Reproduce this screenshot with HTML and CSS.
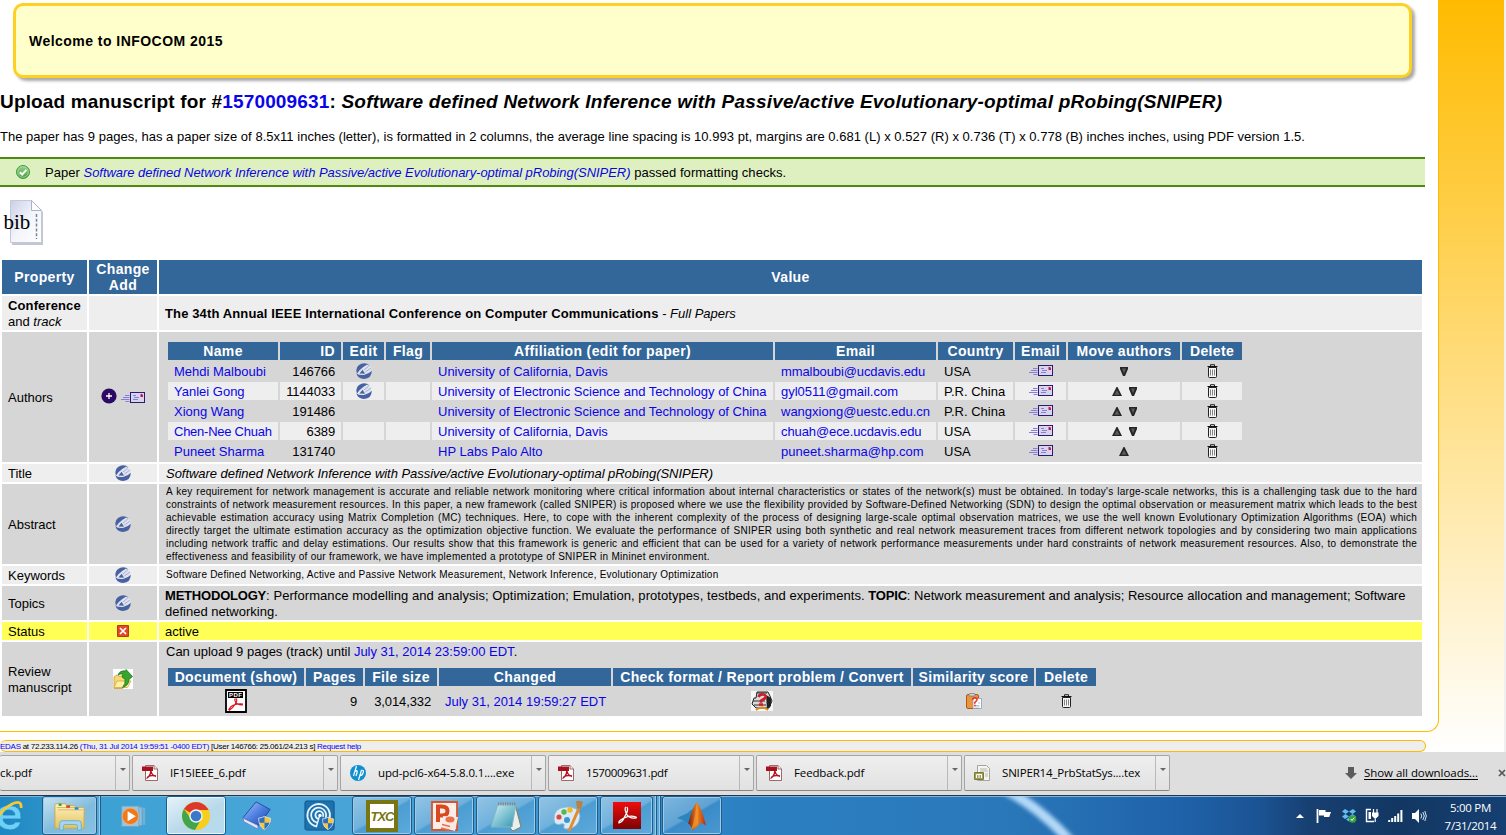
FILE: index.html
```html
<!DOCTYPE html>
<html lang="en">
<head>
<meta charset="utf-8">
<title>Upload manuscript</title>
<link rel="stylesheet" href="styles.css">
</head>
<body>
<svg class="defs" aria-hidden="true">
  <defs>
    <linearGradient id="gPage" x1="0" y1="0" x2="1" y2="1"><stop offset="0" stop-color="#c9cfe6"/><stop offset=".5" stop-color="#f3f5fc"/><stop offset="1" stop-color="#fff"/></linearGradient>
    <linearGradient id="gGreen" x1="0" y1="0" x2="0" y2="1"><stop offset="0" stop-color="#9ad48b"/><stop offset="1" stop-color="#3f9c3a"/></linearGradient>
    <linearGradient id="gRed" x1="0" y1="0" x2="0" y2="1"><stop offset="0" stop-color="#ef0d0d"/><stop offset="1" stop-color="#7c0303"/></linearGradient>
    <linearGradient id="gFlame" x1="0" y1="0" x2="1" y2="0"><stop offset="0" stop-color="#7b1d10"/><stop offset=".5" stop-color="#f08322"/><stop offset="1" stop-color="#b12a10"/></linearGradient>
    <linearGradient id="gFolder" x1="0" y1="0" x2="0" y2="1"><stop offset="0" stop-color="#fdf3c0"/><stop offset="1" stop-color="#e3c25e"/></linearGradient>
    <linearGradient id="gBook" x1="0" y1="0" x2="1" y2="1"><stop offset="0" stop-color="#a9c8ff"/><stop offset=".5" stop-color="#4e7fe0"/><stop offset="1" stop-color="#1c3fa6"/></linearGradient>
    <linearGradient id="gNote" x1="0" y1="0" x2="1" y2="1"><stop offset="0" stop-color="#d6f3f8"/><stop offset="1" stop-color="#2f96b0"/></linearGradient>
    <symbol id="pencil" viewBox="0 0 16 16">
      <path d="M8 .2Q11.500.2 13.500 2.500L8 3.500Q3.500 6.500 1 10.500-1 5 3 2 5.500.2 8 .2Z" fill="#4762a2"/>
      <path d="M1.200 11 7 4.500 11 1.600 15.800 4.600 15 8.600 8 11.800Z" fill="#dfe3ee"/>
      <path d="M3.500 10.600 6.600 6.800 9 10.800Z" fill="#4762a2"/>
      <path d="M8 7 12.600 3.200M9.400 9 14.800 5.200" stroke="#9aa8cc" stroke-width=".9"/>
      <path d="M.3 10.200Q3 12.600 8 12 13 11 15.800 7.800 15.600 15.800 8 15.900 2 15.700.3 10.200Z" fill="#4762a2"/>
    </symbol>
    <symbol id="mail" viewBox="0 0 24 11">
      <rect x="9.500" y=".5" width="14" height="10" fill="#d6d6e8" stroke="#2b1a70"/>
      <path d="M4 3.500h4.500M2 5.500h6.500M0 7.500h8.500M4.500 9.500h4M12 3.500h3M13 5.500h5M12 7.500h5" stroke="#8a7be0"/>
      <path d="M19.500 2h2v1h.5v2h-2.500z" fill="#c5156b"/>
    </symbol>
    <symbol id="trash" viewBox="0 0 11 14">
      <path d="M1.500 3.500h8v9q0 1-1 1h-6q-1 0-1-1z" fill="#f6f6f6" stroke="#222"/>
      <path d="M.5 2.500h10" stroke="#111"/><path d="M3.500 2V.7h4V2" stroke="#222" fill="none"/>
      <path d="M3.500 5.500v6M5.500 5.500v6M7.500 5.500v6" stroke="#666" stroke-width=".8"/>
    </symbol>
    <symbol id="up" viewBox="0 0 10 9"><path d="M4.500 0h1L10 9H0Z" fill="#262626"/><path d="M5 3 7.500 7.800h-5z" fill="#5b5b5b"/></symbol>
    <symbol id="down" viewBox="0 0 8 9"><path d="M0 0H8V2L5 9H3L0 2Z" fill="#262626"/><path d="M2 1.500h4L4 6.500z" fill="#5b5b5b"/></symbol>
    <symbol id="pdf" viewBox="0 0 16 16">
      <path d="M3.500.5H12L15.500 4v11.500h-12z" fill="#fff" stroke="#9a6a6e"/>
      <path d="M12 .5V4h3.500" fill="#eee" stroke="#9a6a6e"/>
      <path d="M0 1.500h11v4.500H0z" fill="#a5111c"/>
      <path d="M8.800 5.500q.5 4.500 5.200 6M8.800 6q-.3 5-4.300 7.500M5.500 11.800q4-2 8.500-.8" stroke="#b5121f" stroke-width="1.400" fill="none"/>
    </symbol>
    <symbol id="shield" viewBox="0 0 14 15">
      <path d="M7 0Q10 2 13.500 2 14 10.500 7 14.800 0 10.500.5 2 4 2 7 0Z" fill="#f6c53c"/>
      <path d="M7 0v7.200H.6Q.3 4 .5 2 4 2 7 0ZM7 7.200h6.400Q12 12 7 14.800Z" fill="#2a6fc4"/>
      <path d="M7 .3Q10 2.200 13.200 2.200 13.600 10.200 7 14.400.4 10.200.8 2.200 4 2.200 7 .3Z" fill="none" stroke="#dfe8ee" stroke-width=".8"/>
    </symbol>
  </defs>
</svg>

<div class="page">
  <main class="content">
    <div class="welcome">Welcome to INFOCOM 2015</div>
    <h1 class="title">Upload manuscript for #<a>1570009631</a>: <i>Software defined Network Inference with Passive/active Evolutionary-optimal pRobing(SNIPER)</i></h1>
    <p class="facts">The paper has 9 pages, has a paper size of 8.5x11 inches (letter), is formatted in 2 columns, the average line spacing is 10.993 pt, margins are 0.681 (L) x 0.527 (R) x 0.736 (T) x 0.778 (B) inches inches, using PDF version 1.5.</p>
    <div class="notice">
      <svg class="check" viewBox="0 0 14 14"><circle cx="7" cy="7" r="6.500" fill="url(#gGreen)" stroke="#3f9a3c"/><circle cx="7" cy="7" r="5.300" fill="none" stroke="#b5e0a8" stroke-width=".7"/><path d="M3.800 7.200 6.200 9.500 10.400 4.800" stroke="#fff" stroke-width="2" fill="none"/></svg>
      <span class="passed">Paper <a class="ital">Software defined Network Inference with Passive/active Evolutionary-optimal pRobing(SNIPER)</a> passed formatting checks.</span>
    </div>
    <svg class="bib" viewBox="0 0 46 50">
      <path d="M13 4h20l10 10v33H12z" fill="#b4b8c4" opacity=".8"/>
      <path d="M10.500 2.500h21l10 10v32h-31z" fill="url(#gPage)" stroke="#c3c8da"/>
      <path d="M31.500 2.500v10h10z" fill="#fff" stroke="#aab2cc"/>
      <path d="M36.500 16v25" stroke="#7b829b" stroke-width="1.500" stroke-dasharray="3 1.800"/>
      <text x="3.500" y="31" class="bibtext">bib</text>
    </svg>

    <table class="props">
      <colgroup><col class="c1"><col class="c2"><col class="c3"></colgroup>
      <tr class="head tall"><th>Property</th><th>Change<br>Add</th><th>Value</th></tr>
      <tr class="even tall"><td><b class="conf">Conference</b><br>and <i>track</i></td><td></td><td class="flush"><b class="conf">The 34th Annual IEEE International Conference on Computer Communications</b> - <i>Full Papers</i></td></tr>
      <tr class="odd authors">
        <td>Authors</td>
        <td class="mid"><svg class="plus" viewBox="0 0 16 16"><circle cx="8" cy="8" r="7.600" fill="#2d0a63"/><path d="M8 5v6M5 8h6" stroke="#fff" stroke-width="1.300"/></svg><svg class="mail"><use href="#mail"/></svg></td>
        <td class="nest">
          <table class="inner people">
            <colgroup><col class="p1"><col class="p2"><col class="p3"><col class="p4"><col class="p5"><col class="p6"><col class="p7"><col class="p8"><col class="p9"><col class="p10"></colgroup>
            <tr class="head"><th>Name</th><th class="num">ID</th><th>Edit</th><th>Flag</th><th>Affiliation (edit for paper)</th><th>Email</th><th>Country</th><th>Email</th><th>Move authors</th><th>Delete</th></tr>
            <tr class="odd"><td><a>Mehdi Malboubi</a></td><td class="num">146766</td><td class="mid"><svg class="pencil"><use href="#pencil"/></svg></td><td></td><td><a>University of California, Davis</a></td><td><a class="tight">mmalboubi@ucdavis.edu</a></td><td>USA</td><td class="mid"><svg class="mail"><use href="#mail"/></svg></td><td class="mid"><svg class="down"><use href="#down"/></svg></td><td class="mid"><svg class="trash"><use href="#trash"/></svg></td></tr>
            <tr class="even"><td><a>Yanlei Gong</a></td><td class="num">1144033</td><td class="mid"><svg class="pencil"><use href="#pencil"/></svg></td><td></td><td><a>University of Electronic Science and Technology of China</a></td><td><a>gyl0511@gmail.com</a></td><td>P.R. China</td><td class="mid"><svg class="mail"><use href="#mail"/></svg></td><td class="mid"><svg class="up"><use href="#up"/></svg><svg class="down next"><use href="#down"/></svg></td><td class="mid"><svg class="trash"><use href="#trash"/></svg></td></tr>
            <tr class="odd"><td><a>Xiong Wang</a></td><td class="num">191486</td><td></td><td></td><td><a>University of Electronic Science and Technology of China</a></td><td><a>wangxiong@uestc.edu.cn</a></td><td>P.R. China</td><td class="mid"><svg class="mail"><use href="#mail"/></svg></td><td class="mid"><svg class="up"><use href="#up"/></svg><svg class="down next"><use href="#down"/></svg></td><td class="mid"><svg class="trash"><use href="#trash"/></svg></td></tr>
            <tr class="even"><td><a class="name">Chen-Nee Chuah</a></td><td class="num">6389</td><td></td><td></td><td><a>University of California, Davis</a></td><td><a class="tight">chuah@ece.ucdavis.edu</a></td><td>USA</td><td class="mid"><svg class="mail"><use href="#mail"/></svg></td><td class="mid"><svg class="up"><use href="#up"/></svg><svg class="down next"><use href="#down"/></svg></td><td class="mid"><svg class="trash"><use href="#trash"/></svg></td></tr>
            <tr class="odd"><td><a>Puneet Sharma</a></td><td class="num">131740</td><td></td><td></td><td><a>HP Labs Palo Alto</a></td><td><a>puneet.sharma@hp.com</a></td><td>USA</td><td class="mid"><svg class="mail"><use href="#mail"/></svg></td><td class="mid"><svg class="up"><use href="#up"/></svg></td><td class="mid"><svg class="trash"><use href="#trash"/></svg></td></tr>
          </table>
        </td>
      </tr>
      <tr class="even"><td>Title</td><td class="mid"><svg class="pencil"><use href="#pencil"/></svg></td><td><i class="ital">Software defined Network Inference with Passive/active Evolutionary-optimal pRobing(SNIPER)</i></td></tr>
      <tr class="odd abstract">
        <td>Abstract</td><td class="mid"><svg class="pencil"><use href="#pencil"/></svg></td>
        <td class="level">
          <div class="small full">A key requirement for network management is accurate and reliable network monitoring where critical information about internal characteristics or states of the network(s) must be obtained. In today's large-scale networks, this is a challenging task due to the hard</div>
          <div class="small full">constraints of network measurement resources. In this paper, a new framework (called SNIPER) is proposed where we use the flexibility provided by Software-Defined Networking (SDN) to design the optimal observation or measurement matrix which leads to the best</div>
          <div class="small full">achievable estimation accuracy using Matrix Completion (MC) techniques. Here, to cope with the inherent complexity of the process of designing large-scale optimal observation matrices, we use the well known Evolutionary Optimization Algorithms (EOA) which</div>
          <div class="small full">directly target the ultimate estimation accuracy as the optimization objective function. We evaluate the performance of SNIPER using both synthetic and real network measurement traces from different network topologies and by considering two main applications</div>
          <div class="small full">including network traffic and delay estimations. Our results show that this framework is generic and efficient that can be used for a variety of network performance measurements under hard constraints of network measurement resources. Also, to demonstrate the</div>
          <div class="small">effectiveness and feasibility of our framework, we have implemented a prototype of SNIPER in Mininet environment.</div>
        </td>
      </tr>
      <tr class="even"><td>Keywords</td><td class="mid"><svg class="pencil"><use href="#pencil"/></svg></td><td class="level"><div class="small keys">Software Defined Networking, Active and Passive Network Measurement, Network Inference, Evolutionary Optimization</div></td></tr>
      <tr class="odd tall"><td>Topics</td><td class="mid"><svg class="pencil"><use href="#pencil"/></svg></td><td class="flush topics"><b class="topic">METHODOLOGY</b><span class="wide">: Performance modelling and analysis; Optimization; Emulation, prototypes, testbeds, and experiments. </span><b class="topic">TOPIC</b>: Network measurement and analysis; Resource allocation and management; Software<br>defined networking.</td></tr>
      <tr class="status"><td>Status</td><td class="mid"><svg class="cross" viewBox="0 0 12 12"><path d="M0 0h12v12H0z" fill="#fff"/><path d="M.5.5h11v11H.5z" fill="#e0492a" stroke="#b33a20"/><path d="M3 3l6 6M9 3l-6 6" stroke="#fff" stroke-width="1.700"/></svg></td><td class="flush">active</td></tr>
      <tr class="odd review">
        <td>Review<br>manuscript</td>
        <td class="mid"><svg class="upload" viewBox="0 0 20 20"><path d="M0 0h20v20H0z" fill="#fff"/><path d="M1 8l3-2 3 1.500 3-1.500v3h5l-2 8.500-4 2H1z" fill="#f7d873" stroke="#c79a35" stroke-width=".8"/><path d="M1 18.500 4 12h14l-3.500 6.500z" fill="#fdf0a8" stroke="#d5aa3e" stroke-width=".8"/><path d="M5 6Q7 1 13 2V.5L19.500 7.500 16 10.500q0 6-6.500 8 3.500-4 2.500-8.500L9 8q1-2 1-3-3-.5-5 1Z" fill="#35a52c" stroke="#1d7a1b" stroke-width=".8"/></svg></td>
        <td class="nest">
          <div class="limit">Can upload 9 pages (track) until <a>July 31, 2014 23:59:00 EDT</a>.</div>
          <table class="inner files">
            <colgroup><col class="f1"><col class="f2"><col class="f3"><col class="f4"><col class="f5"><col class="f6"><col class="f7"></colgroup>
            <tr class="head"><th>Document (show)</th><th>Pages</th><th>File size</th><th>Changed</th><th>Check format / Report problem / Convert</th><th>Similarity score</th><th>Delete</th></tr>
            <tr class="odd">
              <td class="mid"><svg class="doc" viewBox="0 0 22 24"><path d="M1 1h20v22H1z" fill="#fff" stroke="#000" stroke-width="1.800"/><path d="M3 3h15v6H3z" fill="#000"/><text x="4" y="8.300" class="doctext">PDF</text><path d="M10.500 9.500q-1.500 1 .3 4 2 2.800 7 2.500M11.500 9.500q1 3-2 6.500-1.500 3-5.500 5.500M3.500 21q2-4 5-5 4-1.500 9.500-1" stroke="#d8101c" stroke-width="1.100" fill="none"/></svg></td>
              <td class="num">9</td><td class="num">3,014,332</td><td><a>July 31, 2014 19:59:27 EDT</a></td>
              <td class="mid"><svg class="printer" viewBox="0 0 22 20"><path d="M0 0h22v20H0z" fill="#f6f6f6"/><path d="M6 1h11l2 4 2 5-3 7H5L1 13l2-6h2z" fill="#d9d9d9" stroke="#222"/><path d="M15 4l5 3v8l-4 3z" fill="#222"/><path d="M2 10h12M3 14h12M6 2h10" stroke="#333"/><path d="M5 19q6-5 12 0" stroke="#e08a1e" stroke-width="2" fill="none"/><path d="M7.500 6q1-3 5-2.500 3.500 1 1.500 3.700l-4 2.600v2M8 13.500h4" stroke="#cf1c2b" stroke-width="2.600" fill="none"/></svg></td>
              <td class="mid"><svg class="clip" viewBox="0 0 16 16"><rect x=".5" y="1.500" width="12" height="14" rx="1.500" fill="#e9963e" stroke="#a95c14"/><rect x="3" y=".5" width="6" height="2.600" rx="1" fill="#cfcfcf" stroke="#777" stroke-width=".7"/><path d="M7 5.500h8.500v10H7z" fill="#fff" stroke="#8e9bb3" stroke-width=".8"/><path d="M8.500 12.500h5M8.500 14h5M12 10h2" stroke="#a6b2c8" stroke-width=".8"/><path d="M6.500 6.800q.3-2.300 2.800-2 2.700.6 1.200 3l-1.700 1.700v1.300M8 12.500h1.700" stroke="#e53a2b" stroke-width="1.600" fill="none"/></svg></td>
              <td class="mid"><svg class="trash"><use href="#trash"/></svg></td>
            </tr>
          </table>
        </td>
      </tr>
    </table>
  </main>
  <footer class="edas"><a>EDAS</a> at 72.233.114.26 <a>(Thu, 31 Jul 2014 19:59:51 -0400 EDT)</a> [User 146766: 25.061/24.213 s] <a>Request help</a></footer>
</div>

<div class="shelf">
  <div class="dl first"><span>ck.pdf</span><i class="arrow"></i></div>
  <div class="dl"><svg class="fi"><use href="#pdf"/></svg><span>IF15IEEE_6.pdf</span><i class="arrow"></i></div>
  <div class="dl"><svg class="fi" viewBox="0 0 16 16"><circle cx="8" cy="8" r="8" fill="#0f90d0"/><path d="M6.500 1 3.500 11M4.800 6.500q2.800-2 2.400.5L6 11M11.500 5 8.500 15M10.800 5.500q3.400-1 2.400 2-1 3.500-3.800 3" stroke="#fff" stroke-width="1.200" fill="none"/></svg><span>upd-pcl6-x64-5.8.0.1....exe</span><i class="arrow"></i></div>
  <div class="dl"><svg class="fi"><use href="#pdf"/></svg><span class="digits">1570009631.pdf</span><i class="arrow"></i></div>
  <div class="dl"><svg class="fi"><use href="#pdf"/></svg><span>Feedback.pdf</span><i class="arrow"></i></div>
  <div class="dl"><svg class="fi" viewBox="0 0 16 16"><path d="M3.500.5h9l3 3v12h-12z" fill="#f4f4f0" stroke="#a5a59d"/><path d="M6 4h7M6 6h8M11 9h3M11 11h3" stroke="#b7b7b0"/><path d="M.5 7.500h9v7h-9z" fill="#9fa056" stroke="#787a36"/><path d="M2.500 13V9.500h5V13M5 9.500V13" stroke="#fff" fill="none"/></svg><span class="tex">SNIPER14_PrbStatSys....tex</span><i class="arrow"></i></div>
  <div class="all"><svg class="darr" viewBox="0 0 12 12"><path d="M3 0h6v6h3l-6 6-6-6h3z" fill="#5c5c5c"/></svg><span class="link">Show all downloads...</span><svg class="close" viewBox="0 0 8 8"><path d="M1 1l6 6M7 1 1 7" stroke="#555" stroke-width="1.700"/></svg></div>
</div>

<div class="taskbar">
  <svg class="streak" viewBox="0 0 120 44"><path d="M12-8Q50 8 88 50" fill="none" stroke="#b4d9f8" stroke-width="10"/></svg>
  <div class="task ie"><svg class="ieicon" viewBox="0 0 34 34"><path d="M29 20H11q1 5.500 7 5.500 4 0 5.500-2.500H29q-3 8-11 8Q5 30 5 18T18 6.500Q30 7 29 20ZM11 16h12q-1-5-6-5t-6 5Z" fill="#6ed0f5" stroke="#1a86c8" stroke-width=".8"/><path d="M3 27Q6 12 20 5q10-4.500 9 4" fill="none" stroke="#f7c92f" stroke-width="2.800"/></svg></div>
  <div class="task btn light w55"><svg class="ic" viewBox="0 0 34 32"><path d="M1 29V5q0-2 2-2h9l1.500 2H22l1 2h9v22z" fill="url(#gFolder)" stroke="#cfa94a"/><path d="M3 7h28M4 9.500h27" stroke="#d9b75c"/><path d="M5 4h3" stroke="#2a9f3a" stroke-width="2.500"/><path d="M13 6h4" stroke="#d2452e" stroke-width="2.500"/><path d="M22 8h4" stroke="#2d83d0" stroke-width="2.500"/><path d="M6 31v-7q0-3 3-3h17q3 0 3 3v7h-4v-4q0-2-2-2H12q-2 0-2 2v4z" fill="#a5d6ee" stroke="#6aaed2"/></svg></div>
  <div class="stack"></div>
  <div class="task w65"><svg class="ic small26" viewBox="0 0 34 32"><path d="M12 6h20v22H12z" fill="#6fb0d6"/><path d="M9 5h19v24H9z" fill="#8dc1e0" stroke="#5d9cc2"/><path d="M2 4h22v26H2z" fill="#9bc5df" stroke="#6da3c4"/><circle cx="13" cy="17" r="10.500" fill="#f0791c" stroke="#f7b36f"/><path d="M9.500 10.500 20 17 9.500 23.500z" fill="#fff"/></svg></div>
  <div class="task btn active w60"><svg class="ic c28" viewBox="0 0 30 30"><circle cx="15" cy="15" r="14" fill="#f6cf1d"/><path d="M15 15 2.900 8A14 14 0 0 1 27.100 8L27.500 9H15Z" fill="#db3a2b"/><path d="M2.900 8A14 14 0 0 0 14 29l6-10.500-9.500 0Z" fill="#3fa64b"/><circle cx="15" cy="15" r="6.700" fill="#f4f4f4"/><circle cx="15" cy="15" r="5.300" fill="#3a78c9"/></svg></div>
  <div class="task w62"><svg class="ic" viewBox="0 0 34 32"><path d="M2 18 16 1l15 8-12 17z" fill="url(#gBook)" stroke="#2447a8"/><path d="M2 18l16 8v4L3 22z" fill="#dfe8f8" stroke="#6484c8"/><svg x="18" y="16" width="14" height="15"><use href="#shield"/></svg></svg></div>
  <div class="task w64"><svg class="ic" viewBox="0 0 34 34"><rect x="1" y="1" width="31" height="31" rx="2" fill="#1d71ae" stroke="#0f568c"/><g fill="none" stroke="#e8f4fc" stroke-width="1.900"><path d="M13 28a12 12 0 1 1 14-8"/><path d="M14 24a8 8 0 1 1 9-5"/><path d="M15 20a4.200 4.200 0 1 1 5-2"/></g><path d="M17 15l-4 14" stroke="#e8f4fc" stroke-width="1.500"/><circle cx="17" cy="16.500" r="1.800" fill="#fff"/><svg x="19" y="18" width="13" height="14" viewBox="0 0 14 15"><use href="#shield"/></svg></svg></div>
  <div class="task btn w60"><svg class="ic" viewBox="0 0 32 32"><path d="M2 2h28v28H2z" fill="#fff" stroke="#777612" stroke-width="4"/><text x="16" y="21" class="txc" text-anchor="middle">TXC</text></svg></div>
  <div class="task btn w60"><svg class="ic" viewBox="0 0 32 32"><path d="M4 2h25v28H4z" fill="#fbeee8" stroke="#da532c" stroke-width="1.800"/><path d="M10 22V6.500h4q5.500 0 5.500 4.500T14 15.500h-3" fill="none" stroke="#d9491f" stroke-width="4"/><path d="M15 16l15 1-3 14-12-3z" fill="#f9e9e2"/><ellipse cx="22" cy="19.500" rx="4.500" ry="3" fill="#e8714a"/><path d="M14 24.500l8 2M13 28l8 2" stroke="#e8714a" stroke-width="1.500"/></svg></div>
  <div class="task btn w60"><svg class="ic" viewBox="0 0 32 32"><path d="M25 4 31 27l-8 4-3-3z" fill="#e9efef" stroke="#8a7c53"/><path d="M8 4h18l-4 23H1z" fill="url(#gNote)" stroke="#85b7c2"/><path d="M8 4h18" stroke="#7b878c" stroke-width="3" stroke-dasharray="1.300 1"/></svg></div>
  <div class="task btn w60"><svg class="ic" viewBox="0 0 32 32"><path d="M2 20Q1 8 14 7t14 9q-1 12-13 13-4 0-3-3t-3-2q-6 2-7-4Z" fill="#d9ebf7" stroke="#8fb9d8"/><circle cx="7" cy="17" r="2.600" fill="#e2453c"/><circle cx="12" cy="12" r="2.700" fill="#55b848"/><circle cx="18" cy="10" r="2.700" fill="#f4b827"/><circle cx="15" cy="20" r="3" fill="#3a97d4"/><path d="M17 31 28 6" stroke="#e38b2d" stroke-width="3"/><path d="M24 1q4-1 7 1l-2 7-4-1z" fill="#b5824a"/></svg></div>
  <div class="task btn w52"><svg class="ic" viewBox="0 0 32 32"><path d="M2 2h28v27H2z" fill="url(#gRed)"/><path d="M15 7q-2 1 .5 7 3 5 9 4M16 7q2 3-2.500 10-2 5-5.500 6-1-2 5-5 6-3 12-1 1 1-1 1" fill="none" stroke="#fff" stroke-width="1.300"/></svg></div>
  <div class="stack"></div><div class="stack"></div>
  <div class="task btn w60 last"><svg class="ic" viewBox="0 0 34 32"><path d="M1 18 12 13 18 8 14 24 9 21z" fill="#2b86bd"/><path d="M13 24Q18 5 22 2q3 0 10 24-5-4-7-2-4 6-8 7-1-5-4-7Z" fill="url(#gFlame)"/><path d="M22 2q2 6 1 22-4 6-7 7 5-15 6-29Z" fill="#f59a2a" opacity=".7"/></svg></div>
  <div class="tray">
    <svg class="t1" viewBox="0 0 8 4"><path d="M4 0 8 4H0z" fill="#fff"/></svg>
    <svg class="t2" viewBox="0 0 16 14"><path d="M1.500 0v14" stroke="#fff" stroke-width="1.800"/><path d="M3 1h6.500v2H15l-1.800 5H8V6.500H3z" fill="#fff"/></svg>
    <svg class="t3" viewBox="0 0 16 14"><path d="M4 0l4 2.500L4.500 5 1 2.500zM12 0 8 2.500 11.500 5 15 2.500zM4.500 5 8 7.500 4 10 1 7.500zM11.500 5 8 7.500 12 10l3-2.500zM8 8.500l3 2-3 2-3-2z" fill="#62bdf2"/><circle cx="11.500" cy="10" r="3.800" fill="#37a541"/><path d="M9.700 10l1.300 1.400 2.300-2.800" stroke="#fff" fill="none"/></svg>
    <svg class="t4" viewBox="0 0 14 15"><path d="M6 1.500H1.500v12H9" fill="none" stroke="#fff" stroke-width="1.400"/><path d="M3.500 4H6v7H3.500z" fill="#fff"/><path d="M7 4.500h6.500V8L11.500 10h-2.500L7 8z" fill="#fff"/><path d="M8.500 1v4M12 1v4M10.200 10v4" stroke="#fff" stroke-width="1.200"/></svg>
    <svg class="t5" viewBox="0 0 15 12"><path d="M1.200 12v-2M4.200 12V8M7.200 12V6M10.200 12V3.500M13.400 12V0" stroke="#fff" stroke-width="2"/></svg>
    <svg class="t6" viewBox="0 0 15 14"><path d="M0 4h3l4-4v14l-4-4H0z" fill="#fff"/><path d="M8.800 4.500q2 2.500 0 5M10.800 3q3 4 0 8M12.800 2q3 5 0 10" fill="none" stroke="#dce7f3" stroke-width="1"/></svg>
    <div class="clock"><div>5:00 PM</div><div>7/31/2014</div></div>
  </div>
</div>
</body>
</html>
```
FILE: styles.css
```css
* { box-sizing: border-box; }
html, body { margin: 0; height: 835px; overflow: hidden; }
body { font: 13px/16px "Liberation Sans", Arial, sans-serif; color: #000; background: #fff; display: flex; flex-direction: column; }
svg { display: block; flex: none; }
.defs { position: absolute; width: 0; height: 0; }
a { color: #0a04ea; }

.page { height: 752px; flex: none; background: linear-gradient(#ffbb00, #fff); border-right: 2px solid #f0f0f0; }
.content { width: 1439px; height: 732px; background: #fff; border: solid #ffbb00; border-width: 0 1px 1px 0; border-bottom-right-radius: 12px; padding-top: 3px; display: flex; flex-direction: column; align-items: flex-start; }
.welcome { margin-left: 13px; width: 1399px; height: 75px; border: 3px solid #ffd024; border-radius: 10px; background: #ffffcc; box-shadow: 3px 3px 3px #aaa; font-weight: bold; font-size: 14px; letter-spacing: .463px; line-height: 70px; padding-left: 13px; }
.title { margin: 12px 0 0; font-size: 19px; line-height: 24px; letter-spacing: .16px; white-space: nowrap; }
.title i { letter-spacing: .212px; }
.facts { margin: 15px 0 0; white-space: nowrap; letter-spacing: .023px; }
.notice { margin-top: 12px; width: 1425px; height: 30px; border: solid #4f8a10; border-width: 2px 0; background: #dff0c0; display: flex; align-items: center; padding-left: 16px; gap: 15px; white-space: nowrap; }
.passed { padding-top: 2px; letter-spacing: .04px; }
.check { width: 14px; height: 14px; }
.ital { font-style: italic; letter-spacing: -.04px; }
.bib { width: 46px; height: 50px; margin: 11px 0 10px; }
.bibtext { font: 21px "Liberation Serif", serif; }

.props { width: 1424px; border-collapse: separate; border-spacing: 2px; table-layout: fixed; }
.c1 { width: 85px; } .c2 { width: 68px; } .c3 { width: 1263px; }
td, th { padding: 2px 0 0 6px; height: 18px; overflow: hidden; white-space: nowrap; vertical-align: middle; }
th { padding: 0; color: #fff; background: #336699; font-size: 14px; letter-spacing: .35px; text-align: center; }
.tall > td, .tall > th { height: 34px; }
.props > tbody > tr > td:nth-child(3) { padding-left: 7px; }
.even > td { background: #eee; }
.odd > td { background: #d6d6d6; }
.status > td { background: #ffff55; }
.props > tbody > tr > .flush:nth-child(3) { padding-left: 6px; }
.props > tbody > tr > .level { padding-top: 0; }
.conf { letter-spacing: .13px; }
.wide { letter-spacing: .06px; }
.topic { letter-spacing: -.2px; }
.tight { letter-spacing: -.1px; }
.name { letter-spacing: -.25px; }
.mid { text-align: center; padding: 0; line-height: 0; }
.mid svg { display: inline-block; vertical-align: middle; }
td.num { text-align: right; padding: 2px 6px 0 0; letter-spacing: -.12px; }
th.num { text-align: right; padding: 0 6px 0 0; }
.nest { vertical-align: top; }
.authors > td { height: 130px; }
.authors > .nest { padding-top: 8px; }
.inner { border-spacing: 2px; table-layout: fixed; }
.people { width: 1078px; }
.p1 { width: 110px; } .p2 { width: 61px; } .p3 { width: 41px; } .p4 { width: 44px; } .p5 { width: 341px; }
.p6 { width: 161px; } .p7 { width: 75px; } .p8 { width: 51px; } .p9 { width: 112px; } .p10 { width: 60px; }
.files { width: 932px; margin-top: 6px; }
.f1 { width: 136px; } .f2 { width: 57px; } .f3 { width: 72px; } .f4 { width: 172px; } .f5 { width: 298px; } .f6 { width: 121px; } .f7 { width: 60px; }
.files .odd td { height: 26px; }
.review > td { height: 74px; }
.limit { height: 16px; }
.abstract > td { height: 80px; }
.small { width: 1251px; font-size: 10px; line-height: 13px; letter-spacing: .28px; }
.full { text-align: justify; text-align-last: justify; letter-spacing: .25px; }
.keys { letter-spacing: .216px; padding-bottom: 1px; }
.pencil { width: 16px; height: 16px; }
.mail { width: 24px; height: 11px; }
.inner .mail { margin-bottom: 1px; }
.plus { width: 16px; height: 16px; margin: 0 4px 3px 0; }
.trash { width: 11px; height: 14px; }
.up { width: 10px; height: 9px; }
.down { width: 8px; height: 9px; }
.next { margin-left: 7px; }
.cross { width: 12px; height: 12px; }
.upload { width: 20px; height: 20px; }
.doc { width: 22px; height: 24px; }
.doctext { font: bold 6px "Liberation Sans", sans-serif; fill: #fff; letter-spacing: .4px; }
.printer { width: 22px; height: 20px; }
.clip { width: 16px; height: 16px; }

.edas { margin-top: 8px; width: 1426px; height: 12px; background: #eee; border: 1px solid #ffbb00; border-left: 0; border-radius: 6px; font-size: 8px; line-height: 11px; letter-spacing: -.268px; white-space: nowrap; }

.shelf { height: 43px; flex: none; background: #dedede; display: flex; align-items: flex-start; gap: 2px; padding-top: 3px; font: 11.5px/33px "Open Sans", "Noto Sans", sans-serif; letter-spacing: -.13px; white-space: nowrap; }
.dl { width: 206px; height: 36px; border: 1px solid #a5a5a5; border-bottom-color: #868686; border-radius: 2px; background: linear-gradient(#efefef, #e1e1e1); display: flex; align-items: center; padding-left: 8px; }
.dl span { padding-bottom: 2px; }
.first { width: 130px; border-left: 0; padding-left: 0; }
.fi { width: 16px; height: 16px; margin-right: 12px; margin-left: 1px; }
.digits { letter-spacing: -.4px; }
.tex { letter-spacing: -.17px; }
.arrow { margin-left: auto; width: 14px; height: 34px; border-left: 1px solid #b9b9b9; display: flex; justify-content: center; padding-top: 12px; }
.arrow::before { content: ""; width: 0; height: 0; border: 3px solid transparent; border-top-color: #666; border-bottom: 0; }
.all { margin-left: auto; display: flex; align-items: center; padding-top: 1px; letter-spacing: -.05px; }
.darr { width: 12px; height: 12px; margin-right: 7px; }
.link { text-decoration: underline; text-underline-offset: 2px; }
.close { width: 8px; height: 8px; margin-left: 20px; }

.taskbar { position: relative; height: 40px; flex: none; border-top: 1px solid #22364c; box-shadow: inset 0 1px #7fb2da; background: linear-gradient(90deg, #1e86c0 0, #3da1d4 100px, #4aa6d8 300px, #3f95cf 560px, #2b80c2 750px, #2a78ba 1000px, #1f62a9 1180px, #1b5393 1260px, #173f70 1310px, #123762 1400px, #163f72 100%); display: flex; overflow: hidden; }
.streak { position: absolute; left: 985px; top: -2px; width: 120px; height: 44px; filter: blur(2px); }
.task { height: 39px; flex: none; display: flex; align-items: center; justify-content: center; }
.ie { width: 42px; justify-content: flex-start; }
.ieicon { width: 34px; height: 34px; margin-left: -8px; }
.btn { border: 1px solid #1c5d8e; border-radius: 3px; box-shadow: inset 0 0 0 1px #9ccbe9; background: linear-gradient(150deg, #93c4e4 0, #6fb1dc 48%, #4b9dd2 52%, #5eaadb 100%); margin-right: 2px; }
.light { background: linear-gradient(150deg, #c9e3f1, #7fbbdd 55%, #86c3e2); }
.active { background: linear-gradient(150deg, #e6f3f8, #b9d9ea 55%, #b4dcee); box-shadow: inset 0 0 0 1px #e8f5fc; margin-right: 0; }
.w52 { width: 53px; margin-right: 0; } .w55 { width: 55px; margin-right: 0; } .w60 { width: 60px; } .w62 { width: 62px; } .w64 { width: 64px; }
.w65 { width: 65px; }
.stack { width: 4px; height: 39px; flex: none; border-right: 1px solid #1c5d8e; box-shadow: inset -1px 0 #9ccbe9; background: #5ba7d6; }
.last { margin-left: 1px; background: linear-gradient(150deg, #7db6de 0, #5fa3d4 48%, #3a8bc9 52%, #4c98d0 100%); }
.ic { width: 32px; height: 32px; }
.small26 { width: 27px; height: 25px; }
.c28 { width: 30px; height: 30px; }
.txc { font: bold italic 13px "Liberation Sans", sans-serif; fill: #777612; letter-spacing: -1px; }
.tray { margin-left: auto; display: flex; align-items: center; font: 11.5px/18px "Open Sans", "Noto Sans", sans-serif; color: #fff; padding-right: 9px; }
.t1 { width: 8px; height: 4px; margin-right: 12px; margin-top: 1px; }
.t2 { width: 16px; height: 14px; margin-right: 9px; }
.t3 { width: 16px; height: 14px; margin-right: 8px; }
.t4 { width: 14px; height: 15px; margin-right: 9px; }
.t5 { width: 15px; height: 12px; margin-right: 9px; }
.t6 { width: 15px; height: 14px; margin-right: 17px; }
.clock { text-align: center; letter-spacing: -.3px; width: 53px; white-space: nowrap; padding-top: 2px; }
```
